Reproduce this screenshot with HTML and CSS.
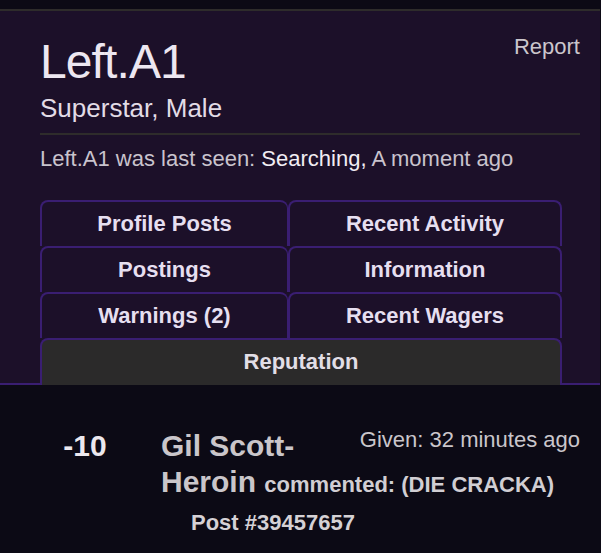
FILE: index.html
```html
<!DOCTYPE html>
<html>
<head>
<meta charset="utf-8">
<link rel="stylesheet" href="styles.css">
</head>
<body>
<div class="page">
  <section class="panel">
    <a class="report">Report</a>
    <h1 class="username">Left.A1</h1>
    <div class="usertitle">Superstar, Male</div>
    <div class="divider"></div>
    <p class="lastseen">Left.A1 was last seen: <span class="hl">Searching,</span> A moment ago</p>
    <nav class="tabs">
      <div class="tab left">Profile Posts</div>
      <div class="tab">Recent Activity</div>
      <div class="tab left">Postings</div>
      <div class="tab">Information</div>
      <div class="tab left">Warnings (2)</div>
      <div class="tab">Recent Wagers</div>
      <div class="tab active">Reputation</div>
    </nav>
  </section>
  <div class="rep-item">
    <div class="score">-10</div>
    <div class="rep-body">
      <div class="given">Given: 32 minutes ago</div>
      <p class="rep-line"><span class="name">Gil Scott-</span><span class="name">Heroin</span> <span class="act">commented: (DIE CRACKA)</span></p>
      <div class="post">Post #39457657</div>
    </div>
  </div>
</div>
</body>
</html>
```
FILE: styles.css
```css
html, body {
  margin: 0;
  padding: 0;
  background: #0c0a15;
}
body {
  font-family: "Liberation Sans", Arial, Helvetica, sans-serif;
  color: #e6e0ea;
}
.page {
  width: 600px;
}
.panel {
  margin-top: 9px;
  border-top: 2px solid #2e2c2b;
  border-bottom: 2px solid #3a1e72;
  background: #1c1029;
  padding: 23px 20px 0 40px;
}
.report {
  float: right;
  font-size: 22px;
  line-height: 26px;
  color: #cbc6cc;
}
.username {
  margin: 0;
  font-size: 48px;
  line-height: 56px;
  letter-spacing: -0.9px;
  font-weight: normal;
  color: #ede7f1;
}
.usertitle {
  font-size: 26px;
  line-height: 36px;
  color: #e2dce6;
}
.divider {
  margin-top: 7px;
  height: 2px;
  background: #2e2c2b;
}
.lastseen {
  margin: 11px 0 0;
  font-size: 22px;
  line-height: 26px;
  color: #c9c3cd;
}
.lastseen .hl {
  color: #f1edf3;
}
.tabs {
  margin-top: 28px;
  margin-bottom: -2px;
  display: grid;
  grid-template-columns: 248px 274px;
}
.tab {
  height: 46px;
  box-sizing: border-box;
  border: 2px solid #3a1e72;
  border-bottom: none;
  border-radius: 8px 8px 0 0;
  display: flex;
  align-items: center;
  justify-content: center;
  font-size: 22px;
  font-weight: bold;
  color: #e6dff0;
}
.tab.left {
  border-right-width: 1px;
}
.tab.active {
  grid-column: 1 / 3;
  height: 47px;
  padding-bottom: 1px;
  background: #2b2a2a;
  color: #e2dee6;
}
.rep-item {
  display: flex;
  align-items: flex-start;
  padding: 43px 20px 0 40px;
}
.score {
  width: 90px;
  flex: none;
  text-align: center;
  font-size: 30px;
  line-height: 36px;
  font-weight: bold;
  color: #ece8ee;
}
.rep-body {
  margin-left: 31px;
  flex: 1;
}
.given {
  float: right;
  font-size: 22px;
  line-height: 24px;
  color: #cac6cb;
}
.rep-line {
  margin: 0;
  font-size: 30px;
  line-height: 36px;
  font-weight: bold;
}
.name {
  color: #cac6ca;
}
.act {
  font-size: 22px;
  line-height: 1;
  color: #d1ced3;
}
.post {
  margin: 5px 0 0 30px;
  font-size: 22px;
  line-height: 36px;
  font-weight: bold;
  color: #d5d1d5;
}
```
